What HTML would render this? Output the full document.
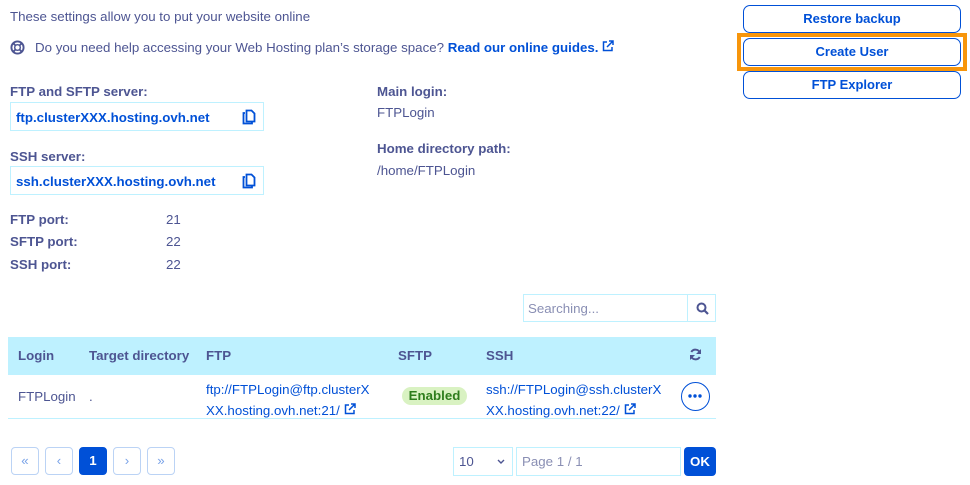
<!DOCTYPE html>
<html><head><meta charset="utf-8"><style>
*{box-sizing:border-box;margin:0;padding:0}
body{width:970px;height:485px;background:#fff;font-family:"Liberation Sans",sans-serif;font-size:13.3px;color:#4d5592;position:relative;overflow:hidden}
.a{position:absolute;white-space:nowrap}
b{font-weight:bold}
.lk{color:#0050d7;font-weight:bold}
.box{position:absolute;border:1px solid #bef1ff;height:29px;width:254px;left:10px;color:#0050d7;font-weight:bold;padding:7px 5px}
.btn{position:absolute;left:743px;width:218px;height:28px;border:1px solid #0050d7;border-radius:7px;color:#0050d7;font-weight:bold;text-align:center;line-height:26px;font-size:13px}
.pg{position:absolute;top:447px;width:28px;height:28px;border:1px solid #bbd3f5;border-radius:4px;color:#7aa3e8;text-align:center;line-height:26px}
.cp{position:absolute;right:7px;top:6px}
</style></head><body>
<div class="a" style="left:10px;top:9px">These settings allow you to put your website online</div>
<svg class="a" style="left:10px;top:40px" width="15" height="15" viewBox="0 0 16 16"><circle cx="8" cy="8" r="6.5" fill="none" stroke="#4d5592" stroke-width="2"/><circle cx="8" cy="8" r="3" fill="none" stroke="#4d5592" stroke-width="1.5"/><path d="M3 3l3 3M13 3l-3 3M3 13l3-3M13 13l-3-3" stroke="#4d5592" stroke-width="2"/></svg>
<div class="a" style="left:35px;top:40px">Do you need help accessing your Web Hosting plan’s storage space? <span class="lk">Read our online guides.</span> <svg width="12" height="12" viewBox="0 0 12 12"><path d="M5 2H1.5v8.5H10V7" fill="none" stroke="#0050d7" stroke-width="1.5"/><path d="M7 1h4v4M11 1L5 7" fill="none" stroke="#0050d7" stroke-width="1.5"/></svg></div>
<div class="a" style="left:10px;top:84px"><b>FTP and SFTP server:</b></div>
<div class="box" style="top:102px">ftp.clusterXXX.hosting.ovh.net<svg class="cp" width="14" height="16" viewBox="0 0 14 16"><path d="M3 4H1.5v10.5H10V13" fill="none" stroke="#0050d7" stroke-width="1.8"/><path d="M4.5 1.5h5l3 3v8h-8z" fill="none" stroke="#0050d7" stroke-width="1.8"/></svg></div>
<div class="a" style="left:10px;top:149px"><b>SSH server:</b></div>
<div class="box" style="top:166px">ssh.clusterXXX.hosting.ovh.net<svg class="cp" width="14" height="16" viewBox="0 0 14 16"><path d="M3 4H1.5v10.5H10V13" fill="none" stroke="#0050d7" stroke-width="1.8"/><path d="M4.5 1.5h5l3 3v8h-8z" fill="none" stroke="#0050d7" stroke-width="1.8"/></svg></div>
<div class="a" style="left:10px;top:212px"><b>FTP port:</b></div><div class="a" style="left:166px;top:212px">21</div>
<div class="a" style="left:10px;top:234px"><b>SFTP port:</b></div><div class="a" style="left:166px;top:234px">22</div>
<div class="a" style="left:10px;top:257px"><b>SSH port:</b></div><div class="a" style="left:166px;top:257px">22</div>
<div class="a" style="left:377px;top:84px"><b>Main login:</b></div>
<div class="a" style="left:377px;top:105px">FTPLogin</div>
<div class="a" style="left:377px;top:141px"><b>Home directory path:</b></div>
<div class="a" style="left:377px;top:163px">/home/FTPLogin</div>
<div class="btn" style="top:5px">Restore backup</div>
<div class="a" style="left:737px;top:33px;width:230px;height:38px;border:4px solid #f7950b"></div>
<div class="btn" style="top:38px">Create User</div>
<div class="btn" style="top:71px">FTP Explorer</div>
<div class="a" style="left:523px;top:294px;width:165px;height:28px;border:1px solid #bef1ff;color:#8a8fb4;padding:6px 4px">Searching...</div>
<div class="a" style="left:687px;top:294px;width:29px;height:28px;border:1px solid #bef1ff"><svg style="position:absolute;left:8px;top:7px" width="13" height="13" viewBox="0 0 13 13"><circle cx="5.5" cy="5.5" r="4" fill="none" stroke="#4d5592" stroke-width="2"/><path d="M8.5 8.5L12 12" stroke="#4d5592" stroke-width="2.2"/></svg></div>
<div class="a" style="left:8px;top:337px;width:708px;height:38px;background:#bef1ff"></div>
<div class="a" style="left:18px;top:348px"><b>Login</b></div>
<div class="a" style="left:89px;top:348px"><b>Target directory</b></div>
<div class="a" style="left:206px;top:348px"><b>FTP</b></div>
<div class="a" style="left:398px;top:348px"><b>SFTP</b></div>
<div class="a" style="left:486px;top:348px"><b>SSH</b></div>
<svg class="a" style="left:689px;top:348px" width="13" height="13" viewBox="0 0 13 13"><path d="M11 5A4.8 4.8 0 0 0 2.3 4M2 8a4.8 4.8 0 0 0 8.7 1" fill="none" stroke="#4d5592" stroke-width="2"/><path d="M12 1v5H7zM1 12V7h5z" fill="#4d5592"/></svg>
<div class="a" style="left:8px;top:418px;width:708px;height:1px;background:#bef1ff"></div>
<div class="a" style="left:18px;top:389px">FTPLogin</div>
<div class="a" style="left:89px;top:389px">.</div>
<div class="a" style="left:206px;top:379px;color:#0050d7;line-height:21px">ftp://FTPLogin@ftp.clusterX<br>XX.hosting.ovh.net:21/ <svg width="12" height="12" viewBox="0 0 12 12"><path d="M5 2H1.5v8.5H10V7" fill="none" stroke="#0050d7" stroke-width="1.5"/><path d="M7 1h4v4M11 1L5 7" fill="none" stroke="#0050d7" stroke-width="1.5"/></svg></div>
<div class="a" style="left:402px;top:387px;width:65px;height:18px;border-radius:9px;background:#d9f2c2;color:#2e7d1c;font-weight:bold;text-align:center;line-height:18px">Enabled</div>
<div class="a" style="left:486px;top:379px;color:#0050d7;line-height:21px">ssh://FTPLogin@ssh.clusterX<br>XX.hosting.ovh.net:22/ <svg width="12" height="12" viewBox="0 0 12 12"><path d="M5 2H1.5v8.5H10V7" fill="none" stroke="#0050d7" stroke-width="1.5"/><path d="M7 1h4v4M11 1L5 7" fill="none" stroke="#0050d7" stroke-width="1.5"/></svg></div>
<div class="a" style="left:681px;top:382px;width:29px;height:29px;border:1.5px solid #0050d7;border-radius:50%"><svg style="position:absolute;left:6px;top:11px" width="14" height="4" viewBox="0 0 14 4"><circle cx="2" cy="2" r="1.7" fill="#0050d7"/><circle cx="7" cy="2" r="1.7" fill="#0050d7"/><circle cx="12" cy="2" r="1.7" fill="#0050d7"/></svg></div>
<div class="pg" style="left:11px">«</div>
<div class="pg" style="left:45px">‹</div>
<div class="pg" style="left:79px;background:#0050d7;border-color:#0050d7;color:#fff;font-weight:bold">1</div>
<div class="pg" style="left:113px">›</div>
<div class="pg" style="left:147px">»</div>
<div class="a" style="left:453px;top:447px;width:60px;height:29px;border:1px solid #bef1ff;padding:6px 5px;color:#4d5592">10<svg style="position:absolute;right:7px;top:11px" width="8" height="6" viewBox="0 0 8 6"><path d="M1 1l3 3 3-3" fill="none" stroke="#4d5592" stroke-width="1.4"/></svg></div>
<div class="a" style="left:516px;top:447px;width:165px;height:29px;border:1px solid #bef1ff;padding:6px 5px;color:#8a8fb4">Page 1 / 1</div>
<div class="a" style="left:684px;top:447px;width:32px;height:29px;background:#0050d7;border-radius:4px;color:#fff;font-weight:bold;text-align:center;line-height:29px">OK</div>
</body></html>
